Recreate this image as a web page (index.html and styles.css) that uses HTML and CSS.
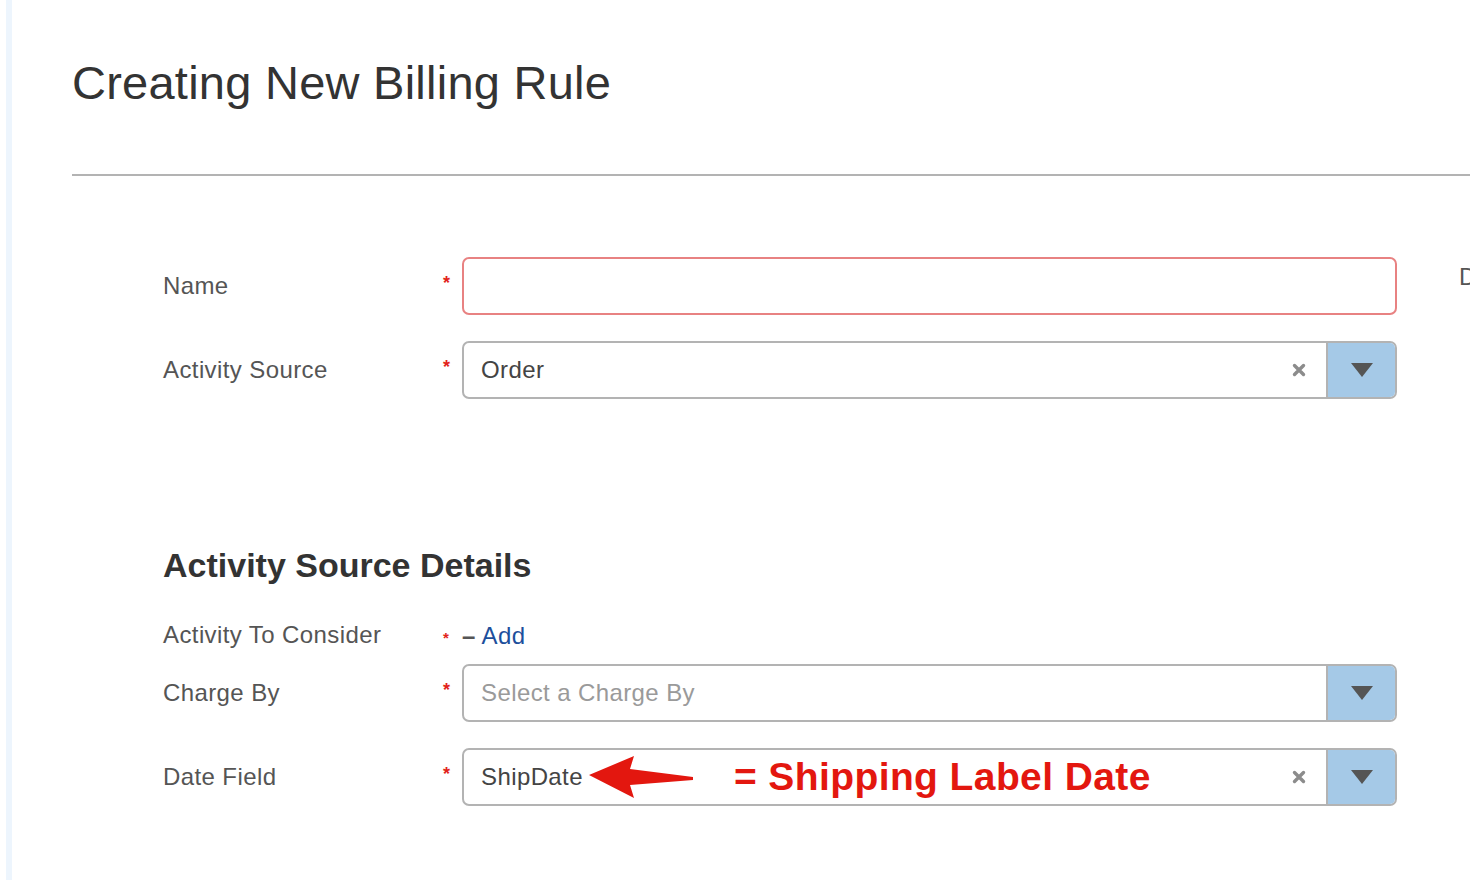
FILE: index.html
```html
<!DOCTYPE html>
<html>
<head>
<meta charset="utf-8">
<title>Creating New Billing Rule</title>
<link rel="stylesheet" href="styles.css">
</head>
<body>
<div class="page">
  <div class="strip"></div>
  <main class="content">
    <h1 class="title">Creating New Billing Rule</h1>
    <hr class="divider">
    <div class="columns">
      <div class="form">
        <div class="row">
          <div class="label">Name</div>
          <div class="req">*</div>
          <div class="field input-error"></div>
        </div>
        <div class="row">
          <div class="label">Activity Source</div>
          <div class="req">*</div>
          <div class="field select">
            <div class="value">Order</div>
            <span class="clear"><svg width="14" height="14" viewBox="0 0 14 14"><path d="M2.5 2.5 L11.5 11.5 M11.5 2.5 L2.5 11.5" stroke="#8c8c8c" stroke-width="3.4" stroke-linecap="round"/></svg></span>
            <div class="toggle"><svg width="22" height="14" viewBox="0 0 22 14"><path d="M0 0 H22 L11 14 Z" fill="#555"/></svg></div>
          </div>
        </div>

        <h2 class="section">Activity Source Details</h2>

        <div class="row row-short">
          <div class="label">Activity To Consider</div>
          <div class="req req-small">*</div>
          <div class="adder"><span class="dash">–</span> <span class="link">Add</span></div>
        </div>
        <div class="row">
          <div class="label">Charge By</div>
          <div class="req">*</div>
          <div class="field select">
            <div class="value placeholder">Select a Charge By</div>
            <div class="toggle"><svg width="22" height="14" viewBox="0 0 22 14"><path d="M0 0 H22 L11 14 Z" fill="#555"/></svg></div>
          </div>
        </div>
        <div class="row">
          <div class="label">Date Field</div>
          <div class="req">*</div>
          <div class="field select">
            <div class="value">ShipDate<svg class="arrow" width="106" height="46" viewBox="0 0 106 46"><polygon points="0,21 45,2 41,15 104,23 104,26 41,31 45,44" fill="#e3170f"/></svg><span class="note">= Shipping Label Date</span></div>
            <span class="clear"><svg width="14" height="14" viewBox="0 0 14 14"><path d="M2.5 2.5 L11.5 11.5 M11.5 2.5 L2.5 11.5" stroke="#8c8c8c" stroke-width="3.4" stroke-linecap="round"/></svg></span>
            <div class="toggle"><svg width="22" height="14" viewBox="0 0 22 14"><path d="M0 0 H22 L11 14 Z" fill="#555"/></svg></div>
          </div>
        </div>
      </div>
      <div class="side">
        <div class="label">Description</div>
      </div>
    </div>
  </main>
</div>
</body>
</html>
```

FILE: styles.css
```css
html, body {
  margin: 0;
  padding: 0;
  background: #fff;
  overflow: hidden;
}
body {
  font-family: "Liberation Sans", Arial, Helvetica, sans-serif;
  width: 1470px;
  height: 880px;
}
.page {
  display: flex;
  height: 880px;
  padding-left: 6px;
}
.strip {
  width: 6px;
  flex: none;
  background: #edf5fd;
}
.content {
  flex: 1;
  padding-left: 60px;
  min-width: 0;
  overflow: hidden;
}
.title {
  margin: 59px 0 0 0;
  font-size: 47px;
  line-height: 47px;
  font-weight: normal;
  color: #333;
  letter-spacing: 0.25px;
}
.divider {
  margin: 68px 0 0 0;
  border: none;
  height: 2px;
  background: #b3b3b3;
}
.columns {
  display: flex;
  padding-left: 91px;
  padding-top: 81px;
  gap: 62px;
  width: 1600px;
}
.form {
  width: 1234px;
  flex: none;
}
.row {
  display: flex;
  align-items: center;
  height: 58px;
  margin-bottom: 26px;
}
.row-short {
  height: 30px;
  margin-bottom: 14px;
}
.label {
  width: 280px;
  flex: none;
  font-size: 24px;
  letter-spacing: 0.4px;
  color: #555;
}
.req {
  width: 19px;
  flex: none;
  font-size: 18px;
  line-height: 18px;
  height: 18px;
  font-weight: bold;
  color: #e2231a;
  margin-top: -6px;
}
.req-small {
  font-size: 15px;
  margin-top: 6px;
}
.field {
  flex: 1;
  height: 58px;
  box-sizing: border-box;
  border: 2px solid #b3b3b3;
  border-radius: 7px;
  background: #fff;
}
.input-error {
  border-color: #e88282;
}
.select {
  display: flex;
  align-items: center;
  overflow: hidden;
}
.value {
  flex: 1;
  display: flex;
  align-items: center;
  padding-left: 17px;
  font-size: 24px;
  letter-spacing: 0.4px;
  color: #444;
  white-space: nowrap;
}
.placeholder {
  color: #9a9a9a;
}
.arrow {
  margin-left: 6px;
  flex: none;
}
.note {
  margin-left: 39px;
  font-size: 39px;
  font-weight: bold;
  color: #e3170f;
  letter-spacing: 0.4px;
}
.clear {
  display: flex;
  width: 14px;
  height: 14px;
  margin-right: 20px;
}
.toggle {
  width: 67px;
  height: 100%;
  flex: none;
  border-left: 2px solid #b3b3b3;
  background: #a5c9e7;
  display: flex;
  align-items: center;
  justify-content: center;
}
.adder {
  font-size: 24px;
  letter-spacing: 0.4px;
  color: #444;
  margin-top: 2px;
}
.dash {
  font-weight: bold;
  color: #555;
}
.link {
  color: #1d4f9c;
}
.section {
  margin: 146px 0 35px 0;
  font-size: 34px;
  line-height: 40px;
  font-weight: bold;
  color: #333;
}
.side {
  padding-top: 6px;
}
.side .label {
  width: auto;
}
```
